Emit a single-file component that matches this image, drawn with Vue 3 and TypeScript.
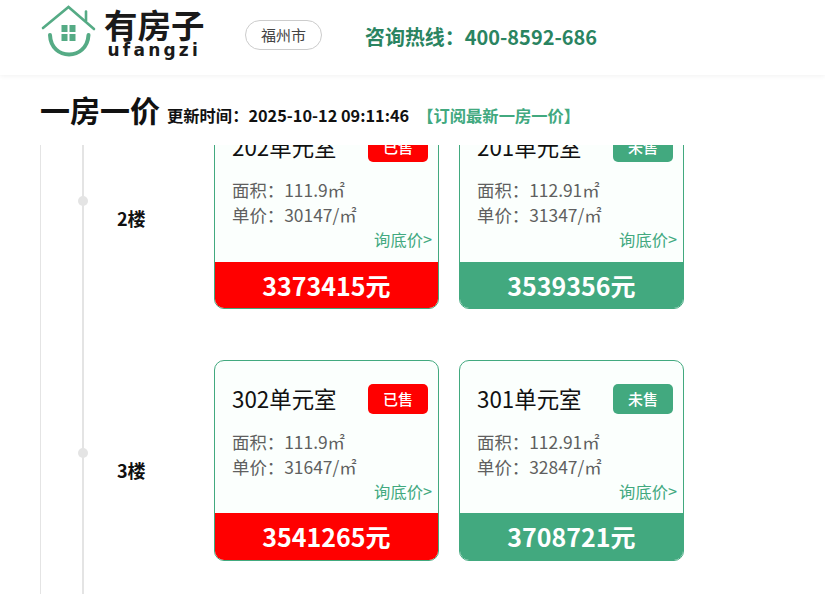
<script setup lang="ts">
interface Room {
  name: string
  area: string
  unitPrice: number
  total: number
  sold: boolean
}

interface Floor {
  label: string
  rooms: Room[]
}

const floors: Floor[] = [
  {
    label: '2楼',
    rooms: [
      { name: '202单元室', area: '111.9', unitPrice: 30147, total: 3373415, sold: true },
      { name: '201单元室', area: '112.91', unitPrice: 31347, total: 3539356, sold: false },
    ],
  },
  {
    label: '3楼',
    rooms: [
      { name: '302单元室', area: '111.9', unitPrice: 31647, total: 3541265, sold: true },
      { name: '301单元室', area: '112.91', unitPrice: 32847, total: 3708721, sold: false },
    ],
  },
]
</script>

<template>
  <div class="page">
    <header class="top-bar">
      <div class="logo">
        <svg class="logo-icon" viewBox="0 0 56 56" width="56" height="56" fill="none" stroke="#55ab85" stroke-linecap="round">
          <path d="M2 23 L27.5 2 L53 24" stroke-width="2.6" />
          <path d="M45 6.5 V15.5" stroke-width="2.6" />
          <path d="M9 30 C10 56 46 56 47.5 30" stroke-width="4" />
          <g fill="#55ab85" stroke="none">
            <rect x="20.5" y="20" width="6" height="7" />
            <rect x="28.5" y="20" width="6" height="7" />
            <rect x="20.5" y="29" width="6" height="7" />
            <rect x="28.5" y="29" width="6" height="7" />
          </g>
        </svg>
        <div class="logo-text">
          <span class="logo-cn">有房子</span>
          <span class="logo-en">ufangzi</span>
        </div>
      </div>
      <div class="city">福州市</div>
      <div class="hotline">咨询热线：400-8592-686</div>
    </header>

    <div class="title-row">
      <h1 class="title">一房一价</h1>
      <span class="update-time">更新时间：2025-10-12 09:11:46</span>
      <a class="subscribe">【订阅最新一房一价】</a>
    </div>

    <div class="viewport">
      <div class="outer-rail">
        <div class="inner-rail">
          <section v-for="floor in floors" :key="floor.label" class="floor">
            <i class="dot" />
            <div class="floor-label">{{ floor.label }}</div>
            <div class="room-list">
              <article v-for="room in floor.rooms" :key="room.name" class="room" :class="{ sold: room.sold }">
                <div class="room-body">
                  <div class="room-head">
                    <span class="room-name">{{ room.name }}</span>
                    <span class="badge">{{ room.sold ? '已售' : '未售' }}</span>
                  </div>
                  <div class="room-info">面积：{{ room.area }}㎡</div>
                  <div class="room-info">单价：{{ room.unitPrice }}/㎡</div>
                  <div class="ask">询底价&gt;</div>
                </div>
                <div class="room-total">{{ room.total }}元</div>
              </article>
            </div>
          </section>
        </div>
      </div>
    </div>
  </div>
</template>

<style>
html,
body {
  margin: 0;
  overflow: hidden;
  background: #fff;
}
</style>

<style scoped>
.page {
  width: 825px;
  height: 594px;
  display: flex;
  flex-direction: column;
  overflow: hidden;
  font-family: "Noto Sans CJK SC", "Noto Sans", sans-serif;
  color: #111;
}

.top-bar {
  height: 75px;
  flex-shrink: 0;
  display: flex;
  align-items: center;
  padding-left: 41px;
  box-sizing: border-box;
  box-shadow: 0 1px 5px rgba(0, 0, 0, 0.06);
  position: relative;
}

.logo {
  width: 204px;
  display: flex;
  align-items: flex-start;
  height: 75px;
}

.logo-icon {
  margin-top: 5px;
  flex-shrink: 0;
}

.logo-text {
  margin-left: 7px;
  display: flex;
  flex-direction: column;
  align-items: center;
}

.logo-cn {
  font-size: 33.5px;
  font-weight: 700;
  line-height: 36px;
  margin-top: 6px;
  color: #1a1a1a;
}

.logo-en {
  font-family: "DejaVu Sans", sans-serif;
  font-size: 17px;
  font-weight: 700;
  line-height: 16px;
  letter-spacing: 3.2px;
  color: #1a1a1a;
}

.city {
  width: 77px;
  height: 30px;
  box-sizing: border-box;
  border: 1px solid #ccc;
  border-radius: 15px;
  font-size: 15px;
  line-height: 28px;
  text-align: center;
  color: #444;
  margin-top: -5px;
}

.hotline {
  margin-left: 43px;
  margin-top: -3px;
  font-size: 19.95px;
  font-weight: 700;
  color: #2a8461;
}

.title-row {
  height: 70px;
  flex-shrink: 0;
  display: flex;
  align-items: baseline;
  padding-left: 40px;
  box-sizing: border-box;
}

.title {
  margin: 0;
  font-size: 30px;
  font-weight: 700;
  line-height: 69px;
}

.update-time {
  margin-left: 7px;
  font-size: 16.3px;
  font-weight: 700;
}

.subscribe {
  margin-left: 8px;
  font-size: 16.3px;
  font-weight: 700;
  color: #42a97f;
}

.viewport {
  flex: 1;
  min-height: 0;
  overflow: hidden;
}

.outer-rail {
  margin-left: 40px;
  margin-top: -36.6px;
  border-left: 1px solid #e4e4e4;
}

.inner-rail {
  margin-left: 41px;
  border-left: 2px solid #e4e4e4;
}

.floor {
  position: relative;
  display: flex;
  height: 251.6px;
}

.dot {
  position: absolute;
  left: -6px;
  top: 88px;
  width: 10px;
  height: 10px;
  border-radius: 50%;
  background: #e4e4e4;
}

.floor-label {
  width: 130px;
  padding: 97px 0 0 33px;
  box-sizing: border-box;
  font-size: 18px;
  font-weight: 700;
  line-height: 26px;
}

.room-list {
  display: flex;
  gap: 20px;
}

.room {
  width: 225px;
  height: 201px;
  box-sizing: border-box;
  border: 1px solid #42a97f;
  border-radius: 10px;
  background: #fbfffd;
  overflow: hidden;
  display: flex;
  flex-direction: column;
}

.room-body {
  flex: 1;
  padding: 23px 6px 0 17px;
}

.room-head {
  display: flex;
  justify-content: space-between;
  align-items: center;
  height: 30px;
  padding-right: 4px;
  margin-bottom: 16px;
}

.room-name {
  font-size: 22.4px;
  line-height: 30px;
  margin-top: -2px;
}

.badge {
  width: 60px;
  height: 30px;
  border-radius: 5px;
  background: #42a97f;
  color: #fff;
  font-size: 15px;
  font-weight: 500;
  line-height: 30px;
  text-align: center;
}

.sold .badge,
.sold .room-total {
  background: #f00;
}

.room-info {
  font-size: 17.4px;
  line-height: 24.8px;
  color: #5f5f5f;
}

.ask {
  margin-top: -0.6px;
  font-size: 16.3px;
  line-height: 24px;
  text-align: right;
  color: #42a97f;
}

.room-total {
  height: 46.6px;
  background: #42a97f;
  color: #fff;
  font-size: 25px;
  font-weight: 700;
  line-height: 47px;
  text-align: center;
}
</style>
